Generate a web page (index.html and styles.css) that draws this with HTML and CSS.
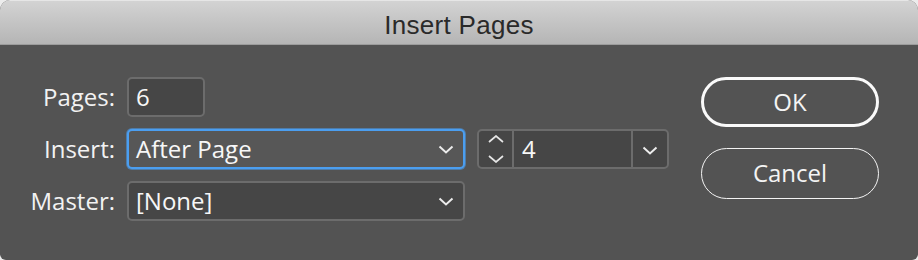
FILE: index.html
```html
<!DOCTYPE html>
<html>
<head>
<meta charset="utf-8">
<link rel="stylesheet" href="styles.css">
</head>
<body>
<div class="dialog">
  <div class="titlebar">Insert Pages</div>
  <div class="content">
    <div class="form">
      <label class="lbl">Pages:</label>
      <div class="field num">6</div>
      <div></div>

      <label class="lbl">Insert:</label>
      <div class="field select focused">
        <span>After Page</span>
        <svg class="chev" width="16" height="9" viewBox="0 0 16 9"><path d="M1.5 1.5 L8 7.5 L14.5 1.5" fill="none" stroke="#ececec" stroke-width="2"/></svg>
      </div>
      <div class="combo">
        <div class="stepper">
          <svg width="18" height="8" viewBox="0 0 18 8"><path d="M2 7 L9 1 L16 7" fill="none" stroke="#e6e6e6" stroke-width="1.7"/></svg>
          <svg width="18" height="8" viewBox="0 0 18 8"><path d="M2 1 L9 7 L16 1" fill="none" stroke="#e6e6e6" stroke-width="1.7"/></svg>
        </div>
        <div class="combo-text">4</div>
        <div class="combo-btn">
          <svg width="16" height="9" viewBox="0 0 16 9"><path d="M1.5 1.5 L8 7.5 L14.5 1.5" fill="none" stroke="#ececec" stroke-width="2"/></svg>
        </div>
      </div>

      <label class="lbl">Master:</label>
      <div class="field select">
        <span>[None]</span>
        <svg class="chev" width="16" height="9" viewBox="0 0 16 9"><path d="M1.5 1.5 L8 7.5 L14.5 1.5" fill="none" stroke="#ececec" stroke-width="2"/></svg>
      </div>
      <div></div>
    </div>
    <div class="buttons">
      <button class="btn primary">OK</button>
      <button class="btn">Cancel</button>
    </div>
  </div>
</div>
</body>
</html>
```
FILE: styles.css
```css
* { box-sizing: border-box; }
html, body {
  margin: 0;
  padding: 0;
  background: #ececec;
}
body {
  width: 918px;
  height: 260px;
  overflow: hidden;
}
.dialog {
  width: 918px;
  height: 260px;
  background: #535353;
  border-radius: 10px 10px 6px 6px;
  overflow: hidden;
  display: flex;
  flex-direction: column;
  font-family: "Open Sans", sans-serif;
}
.titlebar {
  height: 45px;
  flex: none;
  background: linear-gradient(#d3d3d3, #b5b5b5);
  border-top: 1px solid #e6e6e6;
  border-bottom: 1px solid #9c9c9c;
  color: #2a2a2a;
  font-family: "Liberation Sans", sans-serif;
  font-size: 26px;
  letter-spacing: 0.3px;
  display: flex;
  align-items: center;
  justify-content: center;
  padding-top: 5px;
}
.content {
  display: flex;
  padding: 32px 0 0 20px;
  gap: 32px;
}
.form {
  display: grid;
  grid-template-columns: 95px 338px 192px;
  grid-auto-rows: 40px;
  column-gap: 12px;
  row-gap: 12px;
  color: #f2f2f2;
  font-size: 24px;
}
.lbl {
  display: flex;
  align-items: center;
  justify-content: flex-end;
  padding-bottom: 1px;
}
.field {
  background: #464646;
  border: 2px solid #6c6c6c;
  border-radius: 5px;
  display: flex;
  align-items: center;
  padding: 0 8px 1px 7px;
  color: #f7f7f7;
}
.num { width: 78px; }
.select { justify-content: space-between; padding-right: 9px; }
.select .chev { margin-top: 2px; }
.focused {
  background: #575757;
  border-color: #4b9ef0;
  box-shadow: 0 0 0 1px rgba(75, 158, 240, 0.55);
}
.combo {
  display: flex;
  background: #464646;
  border: 2px solid #6c6c6c;
  border-radius: 5px;
  overflow: hidden;
}
.stepper {
  width: 35px;
  flex: none;
  border-right: 2px solid #6c6c6c;
  display: flex;
  flex-direction: column;
  align-items: center;
  justify-content: center;
  gap: 12px;
}
.combo-text {
  flex: 1;
  display: flex;
  align-items: center;
  padding: 0 0 1px 8px;
  color: #f7f7f7;
}
.combo-btn {
  width: 36px;
  flex: none;
  border-left: 2px solid #6c6c6c;
  display: flex;
  align-items: center;
  justify-content: center;
  padding-top: 2px;
}
.buttons {
  display: flex;
  flex-direction: column;
  gap: 21px;
}
.btn {
  width: 178px;
  height: 51px;
  border-radius: 26px;
  background: transparent;
  border: 1.5px solid #f4f4f4;
  color: #f4f4f4;
  font-family: "Open Sans", sans-serif;
  font-size: 24px;
  padding: 0 0 2px 0;
}
.btn.primary {
  height: 50px;
  border: 3px solid #fafafa;
}
```
